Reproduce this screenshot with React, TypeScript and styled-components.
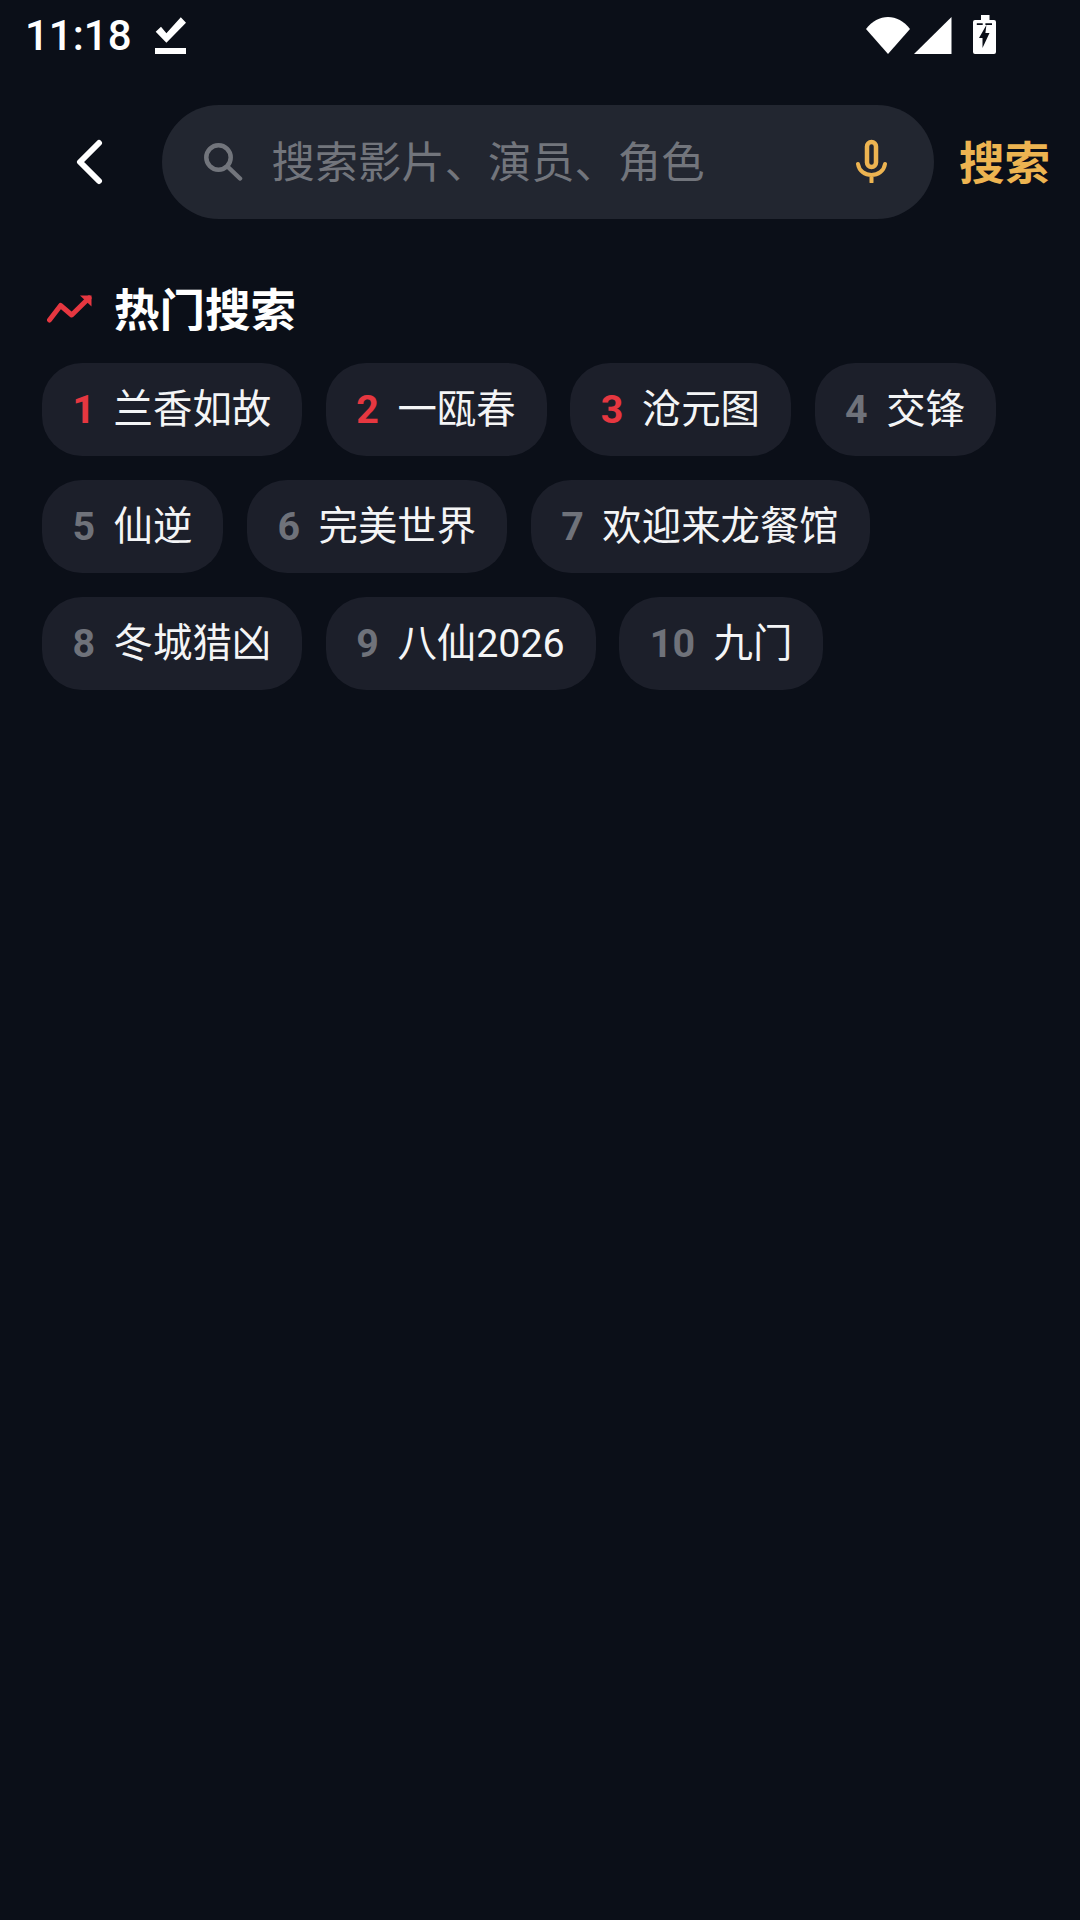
import styled, { createGlobalStyle } from "styled-components";

const GlobalStyle = createGlobalStyle`
  html, body {
    margin: 0;
    padding: 0;
    background: #0b0f18;
  }
  * {
    box-sizing: border-box;
  }
`;

const fontStack = `Roboto, "Noto Sans CJK SC", sans-serif`;

const Page = styled.div`
  width: 1080px;
  height: 1920px;
  overflow: hidden;
  background: #0b0f18;
  font-family: ${fontStack};
`;

const StatusBar = styled.div`
  display: flex;
  align-items: flex-start;
  height: 105px;
  color: #fff;
`;

const Time = styled.span`
  width: 130px;
  margin: 11px 0 0 25px;
  font-size: 42px;
  font-weight: 500;
  line-height: 50px;
`;

const DoneIcon = styled.svg`
  margin-top: 17px;
`;

const StatusIcons = styled.div`
  display: flex;
  align-items: flex-start;
  margin: 15px 84px 0 auto;
`;

const WifiIcon = styled.svg`
  margin-top: 2px;
`;

const SignalIcon = styled.svg`
  margin: 2px 0 0 4.500px;
`;

const BatteryIcon = styled.svg`
  margin-left: 21.500px;
`;

const SearchRow = styled.div`
  display: flex;
  align-items: center;
  height: 114px;
`;

const BackButton = styled.div`
  display: flex;
  width: 162px;
  padding-left: 75px;
`;

const SearchBar = styled.div`
  display: flex;
  align-items: center;
  width: 772px;
  height: 114px;
  padding: 0 47px 0 42px;
  border-radius: 57px;
  background: #222630;
`;

const Placeholder = styled.span`
  margin: 4px 0 0 29px;
  color: #72757c;
  font-size: 43.300px;
  line-height: 56px;
`;

const MicIcon = styled.svg`
  margin: 0 0 3px auto;
`;

const SearchAction = styled.span`
  margin: 5px 0 0 25px;
  color: #edb451;
  font-size: 45.500px;
  font-weight: 700;
  line-height: 56px;
`;

const SectionHeader = styled.div`
  display: flex;
  align-items: center;
  height: 60px;
  margin: 60px 0 24px;
  padding-left: 47px;
`;

const TrendIcon = styled.svg`
  margin-bottom: 3px;
`;

const SectionTitle = styled.h2`
  margin: 5px 0 0 21px;
  color: #fff;
  font-size: 45.500px;
  font-weight: 700;
  line-height: 55px;
`;

const ChipList = styled.div`
  display: flex;
  flex-wrap: wrap;
  gap: 24px 23.600px;
  padding: 0 24px 0 42px;
`;

const Chip = styled.div`
  display: flex;
  align-items: center;
  height: 93px;
  padding: 0 31px 0 30.500px;
  border-radius: 40px;
  background: #1c1f2a;
`;

const Rank = styled.span<{ $hot: boolean }>`
  margin-right: 18.500px;
  color: ${(props) => (props.$hot ? "#e63740" : "#6f727a")};
  font-size: 39.400px;
  font-weight: 700;
  line-height: 50px;
`;

const ChipLabel = styled.span`
  color: #f4f5f6;
  font-size: 39.400px;
  line-height: 52px;
`;

const hotSearches = [
  "兰香如故",
  "一瓯春",
  "沧元图",
  "交锋",
  "仙逆",
  "完美世界",
  "欢迎来龙餐馆",
  "冬城猎凶",
  "八仙2026",
  "九门",
];

export default function App() {
  return (
    <Page>
      <GlobalStyle />
      <StatusBar>
        <Time>11:18</Time>
        <DoneIcon width="31" height="37" viewBox="0 0 31 37">
          <path d="M.7 14.700 6 9.700l5.400 6.600L25.800.3 31 5.700 11.400 25.700z" fill="#fff" />
          <rect x="0" y="31" width="31" height="6" fill="#fff" />
        </DoneIcon>
        <StatusIcons>
          <WifiIcon width="44" height="37" viewBox="0 0 44 37">
            <path d="M0 12C12-4 32-4 44 12L22 37z" fill="#fff" />
          </WifiIcon>
          <SignalIcon width="37.500" height="37" viewBox="0 0 37.500 37">
            <path d="M37.500 0v37H0z" fill="#fff" />
          </SignalIcon>
          <BatteryIcon width="23" height="39" viewBox="0 0 23 39">
            <path
              d="M8 0h8.500v5H21a2 2 0 0 1 2 2v30a2 2 0 0 1-2 2H2a2 2 0 0 1-2-2V7a2 2 0 0 1 2-2h6z"
              fill="#fff"
            />
            <path d="M3.800 8.300h5.900V10H3.800zM12.400 8.300H19V10h-6.600z" fill="#0b0f18" />
            <path d="M13.400 10 6 23h3.500v10l7-15h-4.100z" fill="#0b0f18" />
          </BatteryIcon>
        </StatusIcons>
      </StatusBar>

      <SearchRow>
        <BackButton>
          <svg width="28" height="46" viewBox="0 0 28 46">
            <path
              d="M24 4 5 23l19 19"
              fill="none"
              stroke="#fff"
              strokeWidth="6"
              strokeLinecap="round"
              strokeLinejoin="round"
            />
          </svg>
        </BackButton>
        <SearchBar>
          <svg width="38.500" height="38" viewBox="0 0 38.500 38">
            <circle cx="14.500" cy="14.500" r="12.200" fill="none" stroke="#72757c" strokeWidth="4.500" />
            <path
              d="m24 24 12 11.500"
              fill="none"
              stroke="#72757c"
              strokeWidth="4.500"
              strokeLinecap="round"
            />
          </svg>
          <Placeholder>搜索影片、演员、角色</Placeholder>
          <MicIcon width="31" height="44" viewBox="0 0 31 44">
            <rect x="11" y="3" width="9" height="25" rx="4.500" fill="none" stroke="#edb451" strokeWidth="4.500" />
            <path
              d="M2 25c1 7 7 11 13.500 11S28 32 29 25M15.500 36v7"
              fill="none"
              stroke="#edb451"
              strokeWidth="4"
              strokeLinecap="round"
            />
          </MicIcon>
        </SearchBar>
        <SearchAction>搜索</SearchAction>
      </SearchRow>

      <SectionHeader>
        <TrendIcon width="46" height="30" viewBox="0 0 46 30">
          <path
            d="M2.500 27 13.600 12.500 24.700 22 42 5"
            fill="none"
            stroke="#e63740"
            strokeWidth="5"
            strokeLinecap="round"
            strokeLinejoin="round"
          />
          <path d="M33 2.500h11.500V13.500z" fill="#e63740" />
        </TrendIcon>
        <SectionTitle>热门搜索</SectionTitle>
      </SectionHeader>

      <ChipList>
        {hotSearches.map((label, index) => (
          <Chip key={label}>
            <Rank $hot={index < 3}>{index + 1}</Rank>
            <ChipLabel>{label}</ChipLabel>
          </Chip>
        ))}
      </ChipList>
    </Page>
  );
}
